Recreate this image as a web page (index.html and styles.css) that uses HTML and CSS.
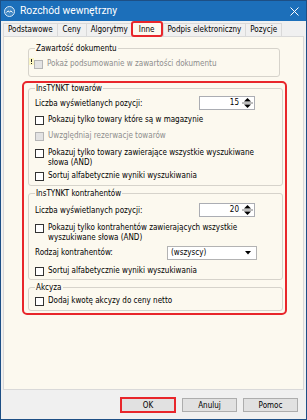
FILE: index.html
```html
<!DOCTYPE html>
<html lang="pl">
<head>
    <meta charset="UTF-8">
    <title>Rozchód wewnętrzny</title>
    <link rel="stylesheet" href="styles.css">
</head>
<body>
    <div class="okno">
        <header class="okno__tytul">
            <svg class="okno__ikona" width="11" height="11" viewBox="0 0 11 11">
                <circle cx="5.5" cy="5.5" r="5" fill="#3f86c4" stroke="#dbe9f6" stroke-width="1"/>
                <path d="M2.5 6.5 Q4 3.5 5.5 6 Q7 3.5 8.5 6.5" fill="none" stroke="#fff" stroke-width="1"/>
            </svg>
            <span class="okno__nazwa">Rozchód wewnętrzny</span>
            <svg class="okno__zamknij" width="9" height="9" viewBox="0 0 9 9">
                <path d="M0.5 0.5 L8.5 8.5 M8.5 0.5 L0.5 8.5" stroke="#fff" stroke-width="1"/>
            </svg>
        </header>

        <nav class="zakladki">
            <div class="zakladki__pozycja">Podstawowe</div>
            <div class="zakladki__pozycja">Ceny</div>
            <div class="zakladki__pozycja">Algorytmy</div>
            <div class="zakladki__pozycja zakladki__pozycja--aktywna">Inne</div>
            <div class="zakladki__pozycja">Podpis elektroniczny</div>
            <div class="zakladki__pozycja">Pozycje</div>
        </nav>

        <main class="strona">
            <fieldset class="grupa grupa--zawartosc">
                <legend>Zawartość dokumentu</legend>
                <div class="wiersz">
                    <svg class="znacznik" width="5" height="7" viewBox="0 0 5 7">
                        <rect x="0" y="0" width="5" height="7" fill="#fbf6c4"/>
                        <rect x="2" y="1" width="1" height="3" fill="#222"/>
                        <rect x="2" y="5" width="1" height="1" fill="#222"/>
                    </svg>
                    <span class="pole pole--wylaczone"></span>
                    <span class="etykieta etykieta--wylaczona">Pokaż podsumowanie w zawartości dokumentu</span>
                </div>
            </fieldset>

            <div class="ramka">
                <fieldset class="grupa grupa--towary">
                    <legend>InsTYNKT towarów</legend>
                    <div class="wiersz">
                        <span class="etykieta">Liczba wyświetlanych pozycji:</span>
                        <div class="licznik">
                            <span class="licznik__wartosc">15</span>
                            <svg class="licznik__strzalki" width="13" height="12" viewBox="0 0 13 12">
                                <path d="M3 4.5 L10 4.5 L6.5 1 Z" fill="#000"/>
                                <path d="M1 6 L12 6" stroke="#7a7a7a" stroke-width="1"/>
                                <path d="M3 7.5 L10 7.5 L6.5 11 Z" fill="#000"/>
                            </svg>
                        </div>
                    </div>
                    <div class="wiersz">
                        <span class="pole"></span>
                        <span class="etykieta">Pokazuj tylko towary które są w magazynie</span>
                    </div>
                    <div class="wiersz">
                        <span class="pole pole--wylaczone"></span>
                        <span class="etykieta etykieta--wylaczona">Uwzględniaj rezerwacje towarów</span>
                    </div>
                    <div class="wiersz wiersz--dwa">
                        <span class="pole"></span>
                        <span class="etykieta">Pokazuj tylko towary zawierające wszystkie wyszukiwane<br>słowa (AND)</span>
                    </div>
                    <div class="wiersz">
                        <span class="pole"></span>
                        <span class="etykieta">Sortuj alfabetycznie wyniki wyszukiwania</span>
                    </div>
                </fieldset>

                <fieldset class="grupa grupa--kontrahenci">
                    <legend>InsTYNKT kontrahentów</legend>
                    <div class="wiersz wiersz--liczba">
                        <span class="etykieta">Liczba wyświetlanych pozycji:</span>
                        <div class="licznik">
                            <span class="licznik__wartosc">20</span>
                            <svg class="licznik__strzalki" width="13" height="12" viewBox="0 0 13 12">
                                <path d="M3 4.5 L10 4.5 L6.5 1 Z" fill="#000"/>
                                <path d="M1 6 L12 6" stroke="#7a7a7a" stroke-width="1"/>
                                <path d="M3 7.5 L10 7.5 L6.5 11 Z" fill="#000"/>
                            </svg>
                        </div>
                    </div>
                    <div class="wiersz wiersz--dwa">
                        <span class="pole"></span>
                        <span class="etykieta">Pokazuj tylko kontrahentów zawierających wszystkie<br>wyszukiwane słowa (AND)</span>
                    </div>
                    <div class="wiersz wiersz--lista">
                        <span class="etykieta">Rodzaj kontrahentów:</span>
                        <div class="lista">
                            <span>(wszyscy)</span>
                            <svg width="6" height="4" viewBox="0 0 6 4">
                                <path d="M0 0 L6 0 L3 3.5 Z" fill="#000"/>
                            </svg>
                        </div>
                    </div>
                    <div class="wiersz">
                        <span class="pole"></span>
                        <span class="etykieta">Sortuj alfabetycznie wyniki wyszukiwania</span>
                    </div>
                </fieldset>

                <fieldset class="grupa grupa--akcyza">
                    <legend>Akcyza</legend>
                    <div class="wiersz">
                        <span class="pole"></span>
                        <span class="etykieta">Dodaj kwotę akcyzy do ceny netto</span>
                    </div>
                </fieldset>
            </div>
        </main>

        <footer class="przyciski">
            <button class="przycisk przycisk--ok">OK</button>
            <button class="przycisk">Anuluj</button>
            <button class="przycisk">Pomoc</button>
        </footer>
    </div>
</body>
</html>
```

FILE: styles.css
```css
* {
    box-sizing: border-box;
}
body {
    margin: 0;
    font-family: "DejaVu Sans Condensed", "Liberation Sans", Arial, sans-serif;
    font-size: 8px;
    line-height: 10px;
    color: #000;
    background-color: #f0f0f0;
}
.okno {
    width: 307px;
    height: 420px;
    border: 1px solid #1d4f85;
    background-color: #f0f0f0;
    display: flex;
    flex-direction: column;
}

/* pasek tytulu */
.okno__tytul {
    height: 20px;
    flex: none;
    background-color: #1c6fba;
    display: flex;
    align-items: center;
    padding: 0 7px 0 3px;
    color: #fff;
}
.okno__ikona {
    flex: none;
}
.okno__nazwa {
    margin-left: 5px;
    font-family: Roboto, "Liberation Sans", sans-serif;
    font-size: 10.3px;
    flex: 1;
}
.okno__zamknij {
    flex: none;
}

/* zakladki */
.zakladki {
    height: 15px;
    flex: none;
    display: flex;
    align-items: flex-end;
    padding-left: 2px;
}
.zakladki__pozycja {
    height: 13px;
    min-width: 30px;
    padding: 0 4px;
    line-height: 12px;
    text-align: center;
    white-space: nowrap;
    background-color: #f0f0f0;
    border: 1px solid #d9d9d9;
    border-bottom: none;
    margin-right: -1px;
}
.zakladki__pozycja--aktywna {
    position: relative;
    z-index: 1;
    height: 16px;
    margin: 0 0 -1px -1px;
    padding: 0 6px;
    line-height: 13px;
    background-color: #fcf9ef;
    border: 2px solid #e8262b;
    border-radius: 3px;
}

/* strona zakladki */
.strona {
    flex: 1;
    margin: 0 2px;
    padding: 6px 0 0 24px;
    background-color: #fcf9ef;
    border: 1px solid #d9d9d9;
}
.grupa {
    margin: 0;
    padding: 0 0 0 6px;
    min-width: 0;
    border: 1px solid #d6d3cb;
    border-radius: 3px;
}
.grupa legend {
    padding: 0 1px;
    line-height: 11px;
}
.grupa--zawartosc {
    width: 252px;
    padding-top: 2px;
    padding-bottom: 4px;
}
.grupa--towary {
    padding-top: 2px;
    padding-bottom: 1px;
}
.grupa--kontrahenci {
    margin-top: 2px;
    padding-top: 3px;
}
.grupa--akcyza {
    margin-top: 2px;
    padding-bottom: 1px;
}

/* czerwona ramka zaznaczenia */
.ramka {
    width: 265px;
    margin: 4px 0 0 -6px;
    padding: 0 2px 2px 4px;
    border: 2px solid #e8262b;
    border-radius: 5px;
}

.wiersz {
    height: 16px;
    display: flex;
    align-items: center;
    white-space: nowrap;
}
.wiersz--dwa {
    height: auto;
    align-items: flex-start;
    padding-top: 4px;
}
.wiersz--dwa .pole {
    margin-top: 1px;
}
.wiersz--liczba {
    height: 17px;
}
.wiersz--lista {
    height: 20px;
}
.znacznik {
    flex: none;
    align-self: flex-start;
    margin: 2px 0 0 -6px;
}
.pole {
    flex: none;
    width: 9px;
    height: 9px;
    margin-right: 4px;
    border: 1px solid #333;
    background-color: #fff;
}
.pole--wylaczone {
    border-color: #b5b5b5;
    background-color: #e3e3e3;
}
.etykieta--wylaczona {
    color: #8d8d8d;
}

.licznik {
    width: 56px;
    height: 14px;
    margin: 0 27px 2px auto;
    display: flex;
    align-items: center;
    justify-content: flex-end;
    background-color: #fff;
    border: 1px solid #abadb3;
}
.licznik__wartosc {
    padding-right: 2px;
}
.lista {
    width: 90px;
    height: 14px;
    margin: 0 25px 0 auto;
    padding: 0 5px 0 3px;
    display: flex;
    align-items: center;
    justify-content: space-between;
    background-color: #fff;
    border: 1px solid #b3b3b3;
}

/* przyciski */
.przyciski {
    height: 29px;
    flex: none;
    display: flex;
    justify-content: flex-end;
    align-items: flex-start;
    gap: 6px;
    padding: 8px 8px 0 0;
}
.przycisk {
    width: 55px;
    height: 14px;
    padding: 0;
    font-family: inherit;
    font-size: 8px;
    color: #000;
    background-color: #e1e1e1;
    border: 1px solid #adadad;
}
.przycisk--ok {
    width: 56px;
    height: 16px;
    margin-top: -1px;
    border: 2px solid #e8262b;
}
```
